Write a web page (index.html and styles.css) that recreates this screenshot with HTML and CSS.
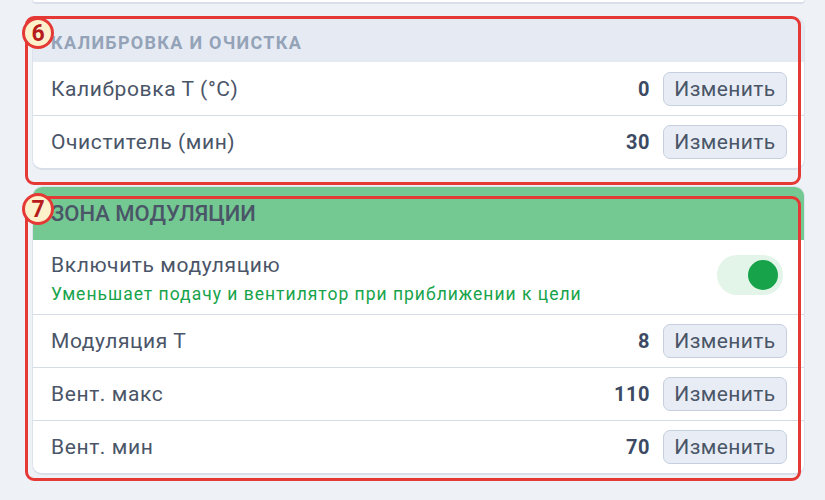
FILE: index.html
```html
<!DOCTYPE html>
<html lang="ru">
<head>
    <meta charset="UTF-8">
    <meta name="viewport" content="width=device-width, initial-scale=1.0">
    <title>Настройки</title>
    <link rel="stylesheet" href="styles.css">
</head>
<body>
    <div class="page">
        <div class="card card-stub"></div>

        <div class="section">
            <div class="card">
                <div class="card-header">Калибровка и очистка</div>
                <div class="row">
                    <span class="row-label">Калибровка Т (°C)</span>
                    <span class="row-value">0</span>
                    <button class="edit-btn">Изменить</button>
                </div>
                <div class="row">
                    <span class="row-label">Очиститель (мин)</span>
                    <span class="row-value">30</span>
                    <button class="edit-btn">Изменить</button>
                </div>
            </div>
            <div class="mark mark-6"></div>
            <div class="badge badge-6">6</div>
        </div>

        <div class="section">
            <div class="card">
                <div class="card-header header-green">Зона модуляции</div>
                <div class="row row-toggle">
                    <div class="row-text">
                        <span class="row-label">Включить модуляцию</span>
                        <span class="row-hint">Уменьшает подачу и вентилятор при приближении к цели</span>
                    </div>
                    <div class="toggle on"><span class="knob"></span></div>
                </div>
                <div class="row">
                    <span class="row-label">Модуляция Т</span>
                    <span class="row-value">8</span>
                    <button class="edit-btn">Изменить</button>
                </div>
                <div class="row">
                    <span class="row-label">Вент. макс</span>
                    <span class="row-value">110</span>
                    <button class="edit-btn">Изменить</button>
                </div>
                <div class="row">
                    <span class="row-label">Вент. мин</span>
                    <span class="row-value">70</span>
                    <button class="edit-btn">Изменить</button>
                </div>
            </div>
            <div class="mark mark-7"></div>
            <div class="badge badge-7">7</div>
        </div>

        <div class="card card-next"></div>
    </div>
</body>
</html>
```

FILE: styles.css
```css
* {
    margin: 0;
    padding: 0;
    box-sizing: border-box;
}

body {
    font-family: Roboto, 'Noto Sans', sans-serif;
    background: #eef2f7;
    color: #4a5568;
    height: 500px;
    overflow: hidden;
}

.page {
    display: flex;
    flex-direction: column;
    padding: 0 20px 0 32px;
}

.card {
    background: #ffffff;
    border: 1px solid #dde3ec;
    border-bottom: 2px solid #d8dfe9;
    border-radius: 10px;
    overflow: hidden;
}

.card-stub {
    height: 4px;
    border-top: none;
    border-radius: 0 0 10px 10px;
    margin-bottom: 13px;
}

.card-next {
    height: 20px;
    margin-top: 17px;
    background: #eef2f7;
    border-bottom: none;
}

.section {
    position: relative;
    margin-bottom: 16px;
}

.card-header {
    height: 44px;
    display: flex;
    align-items: center;
    padding: 4px 18px 0;
    background: #e6ebf3;
    color: #94a3b8;
    font-size: 18px;
    font-weight: 700;
    letter-spacing: 1.3px;
    text-transform: uppercase;
}

.header-green {
    height: 53px;
    background: #74c891;
    color: #4a5568;
    font-size: 22px;
    font-weight: 500;
    letter-spacing: 0;
    padding: 0 18px;
}

.row {
    height: 53px;
    display: flex;
    align-items: center;
    padding: 0 17px 0 18px;
    border-top: 1px solid #d5dce6;
}

.card-header + .row {
    border-top: none;
}

.row-label {
    flex: 1;
    font-size: 21px;
    letter-spacing: 0.6px;
    color: #4a5568;
}

.row-value {
    font-size: 20px;
    font-weight: 700;
    letter-spacing: 0.5px;
    color: #3c4a63;
    margin-right: 13px;
}

.edit-btn {
    width: 124px;
    height: 34px;
    font-family: inherit;
    font-size: 21px;
    letter-spacing: 0.4px;
    color: #4a5568;
    background: #e8edf5;
    border: 1px solid #c5cfdd;
    border-radius: 7px;
}

.row-toggle {
    height: 74px;
}

.row-text {
    flex: 1;
    display: flex;
    flex-direction: column;
    gap: 7px;
    padding-top: 2px;
}

.row-hint {
    font-size: 17.5px;
    letter-spacing: 1px;
    color: #16a34a;
}

.toggle {
    width: 66px;
    height: 40px;
    border-radius: 20px;
    background: #e3f4e8;
    display: flex;
    align-items: center;
    justify-content: flex-end;
    padding: 0 5px;
    margin: -4px 4px 0 0;
}

.knob {
    width: 30px;
    height: 30px;
    border-radius: 50%;
    background: #16a34a;
}

/* annotation overlay */
.mark {
    position: absolute;
    border: 3px solid #e53935;
    border-radius: 9px;
    pointer-events: none;
}

.mark-6 {
    top: -1px;
    left: -7px;
    right: 4px;
    bottom: -15px;
}

.mark-7 {
    top: 10px;
    left: -7px;
    right: 4px;
    bottom: -6px;
}

.badge {
    position: absolute;
    width: 32px;
    height: 32px;
    border-radius: 50%;
    border: 3px solid #e53935;
    background: #fdf1cc;
    color: #b71c1c;
    font-size: 23px;
    font-weight: 700;
    display: flex;
    align-items: center;
    justify-content: center;
    left: -10px;
}

.badge-6 {
    top: 0;
}

.badge-7 {
    top: 7px;
}
```
